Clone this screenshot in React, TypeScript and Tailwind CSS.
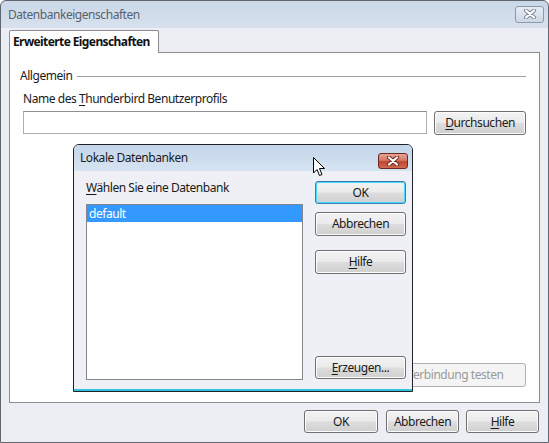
import React from "react";

const font = { fontFamily: '"Noto Sans", "Open Sans", sans-serif' };

function U({ children }: { children: React.ReactNode }) {
  return <span className="underline underline-offset-2 decoration-1">{children}</span>;
}

function Btn({
  children,
  className = "",
  primary = false,
  disabled = false,
}: {
  children: React.ReactNode;
  className?: string;
  primary?: boolean;
  disabled?: boolean;
}) {
  if (disabled) {
    return (
      <div
        className={`flex items-center justify-center rounded-[3px] border border-[#adb2b5] bg-[#f4f4f4] text-[#9a9a9a] ${className}`}
      >
        {children}
      </div>
    );
  }
  return (
    <div
      className={`flex items-center justify-center rounded-[3px] border text-[#1a1a1a] bg-[linear-gradient(to_bottom,#f2f2f2_0%,#ebebeb_48%,#dddddd_52%,#cfcfcf_100%)] ${
        primary
          ? "border-[#3c7fb1] shadow-[inset_0_0_0_1px_#48d8fb]"
          : "border-[#707070] shadow-[inset_0_0_0_1px_#fcfcfc]"
      } ${className}`}
    >
      {children}
    </div>
  );
}

function CloseGlyph({ color }: { color: string }) {
  return (
    <svg width="14" height="10" viewBox="0 0 14 10">
      <path d="M3 1.5 L11 8.5 M11 1.5 L3 8.5" stroke={color} strokeWidth="4.2" strokeLinecap="round" />
      <path d="M3 1.5 L11 8.5 M11 1.5 L3 8.5" stroke="#ffffff" strokeWidth="2.2" strokeLinecap="round" />
    </svg>
  );
}

function LocalDbDialog() {
  return (
    <div className="absolute left-[72px] top-[143px] flex h-[248px] w-[340px] flex-col rounded-t-[6px] border border-[#1f2226] bg-[#eef0f5] shadow-[inset_0_-2px_0_#34c2e2]">
      <div className="flex h-[26px] items-center justify-between rounded-t-[5px] bg-[linear-gradient(to_bottom,#c4d6ea,#d6e3f1)] pl-[6px] pr-[4px]">
        <span className="text-[#1b1b1b]">Lokale Datenbanken</span>
        <div className="mt-[5px] flex h-[16px] w-[30px] items-center justify-center rounded-[3px] border border-[#6e2a22] bg-[linear-gradient(to_bottom,#e8a392_0%,#d57a66_45%,#c1452f_55%,#cf6a52_100%)]">
          <CloseGlyph color="#7b2a20" />
        </div>
      </div>
      <div className="flex flex-1 gap-[12px] pl-[12px] pr-[6px] pt-[7px]">
        <div className="flex flex-col">
          <span className="h-[20px] leading-[20px] text-[#1a1a1a]">
            <U>W</U>ählen Sie eine Datenbank
          </span>
          <div className="mt-[6px] h-[176px] w-[217px] border border-[#828790] bg-white">
            <div className="h-[17px] bg-[#3399ff] pl-[2px] leading-[17px] text-white">default</div>
          </div>
        </div>
        <div className="flex w-[93px] flex-col pt-[3px]">
          <Btn primary className="h-[23px]">OK</Btn>
          <Btn className="mt-[8px] h-[24px]">Abbrechen</Btn>
          <Btn className="mt-[14px] h-[24px]"><U>H</U>ilfe</Btn>
          <div className="flex-1" />
          <Btn className="mb-[12px] h-[23px]"><U>E</U>rzeugen...</Btn>
        </div>
      </div>
    </div>
  );
}

function Cursor() {
  return (
    <svg className="absolute left-[312px] top-[156px]" width="13" height="20" viewBox="0 0 13 20">
      <path
        d="M0.5 0.5 L0.5 16 L4 12.5 L6.5 18.5 L9 17.5 L6.5 11.5 L11.5 11.5 Z"
        fill="#ffffff"
        stroke="#000000"
        strokeWidth="1"
        strokeLinejoin="miter"
      />
    </svg>
  );
}

export default function App() {
  return (
    <div
      style={font}
      className="relative flex h-[443px] w-[549px] flex-col overflow-hidden rounded-t-[6px] border border-[#5f6670] bg-[linear-gradient(to_bottom,#cad7e7_0px,#d8e2ee_28px,#eceef3_29px,#eceef3_100%)] text-[12px] tracking-[-0.45px]"
    >
      {/* title bar */}
      <div className="flex h-[27px] shrink-0 items-center justify-between pl-[7px] pr-[4px]">
        <span className="text-[#59616b]">Datenbankeigenschaften</span>
        <div className="-mt-[1px] flex h-[17px] w-[29px] items-center justify-center rounded-[3px] border border-[#8d99a9] bg-[linear-gradient(to_bottom,#e6ecf4,#cdd8e6)]">
          <CloseGlyph color="#7f8a99" />
        </div>
      </div>

      <div className="flex flex-1 flex-col bg-[#eceef3] px-[8px] pt-[2px]">
        {/* tab strip */}
        <div className="flex">
          <div className="relative z-10 -mb-[1px] h-[23px] w-[150px] whitespace-nowrap rounded-t-[2px] border border-b-0 border-[#898c95] bg-white pl-[3px] font-bold leading-[22px] tracking-[-0.6px] text-[#111]">
            Erweiterte Eigenschaften
          </div>
        </div>

        {/* tab page */}
        <div className="flex h-[351px] w-[531px] flex-col border border-[#898c95] bg-white pl-[10px] pr-[13px]">
          <div className="mt-[14px] flex items-center gap-[5px]">
            <span className="text-[#1a1a1a]">Allgemein</span>
            <div className="h-px flex-1 bg-[#a0a0a0]" />
          </div>
          <div className="mt-[5px] pl-[3px] text-[#1a1a1a]">
            Name des <U>T</U>hunderbird Benutzerprofils
          </div>
          <div className="mt-[3px] flex gap-[7px] pl-[3px]">
            <div className="h-[23px] w-[405px] border border-[#abadb3] border-t-[#8d9095] bg-white" />
            <Btn className="h-[24px] w-[92px]"><U>D</U>urchsuchen</Btn>
          </div>
          <div className="flex-1" />
          <div className="mb-[15px] flex justify-end">
            <Btn disabled className="h-[24px] w-[142px]">Verbindung testen</Btn>
          </div>
        </div>

        {/* dialog buttons */}
        <div className="mt-[7px] flex justify-end pr-[1px]">
          <Btn className="h-[23px] w-[74px]">OK</Btn>
          <Btn className="ml-[8px] h-[23px] w-[73px]">Abbrechen</Btn>
          <Btn className="ml-[7px] h-[23px] w-[73px]"><U>H</U>ilfe</Btn>
        </div>
      </div>

      <LocalDbDialog />
      <Cursor />
    </div>
  );
}
